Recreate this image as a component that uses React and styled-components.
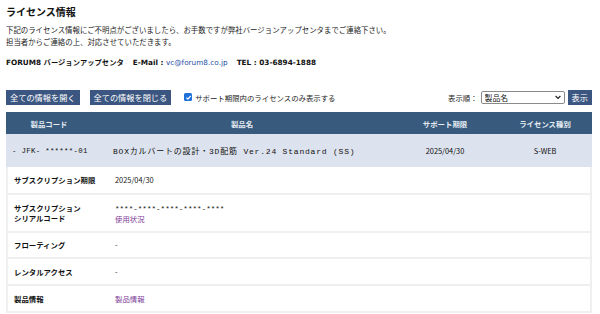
import React from 'react'
import styled, { createGlobalStyle } from 'styled-components'

const GlobalStyle = createGlobalStyle`
  html, body { margin: 0; padding: 0; background: #fff; }
  body {
    font-family: "Noto Sans CJK JP", "Noto Sans", sans-serif;
    color: #222;
  }
`;

const Page = styled.div`
  width: 600px;
  padding: 4px 8px 0 6px;
  box-sizing: border-box;
`;

const Title = styled.h1`
  margin: 0;
  font-size: 10px;
  line-height: 16px;
  font-weight: 700;
  color: #111;
`;

const Lead = styled.p`
  margin: 4px 0 0;
  font-size: 7.42px;
  line-height: 12px;
`;

const Contact = styled.p`
  margin: 9px 0 0;
  font-family: "DejaVu Sans", "Noto Sans CJK JP", sans-serif;
  font-size: 7.3px;
  line-height: 12px;
  font-weight: 700;
  color: #111;

  a { color: #1f4fa8; font-weight: 400; text-decoration: none; }
  span { margin-left: 9px; }
`;

const Toolbar = styled.div`
  margin-top: 20px;
  height: 16px;
  display: flex;
  align-items: center;
  gap: 10px;
`;

const Button = styled.button`
  height: 15px;
  padding: 0 4px;
  border: none;
  background: #3b5680;
  color: #fff;
  font-family: inherit;
  font-size: 8.2px;
  line-height: 15px;
  cursor: pointer;
`;

const CheckLabel = styled.label`
  display: flex;
  align-items: center;
  gap: 3px;
  font-size: 7.4px;
  margin-left: 3px;
`;

const Box = styled.span`
  width: 8px;
  height: 8px;
  border-radius: 1.5px;
  background: #1e6fd9;
  display: flex;
  align-items: center;
  justify-content: center;
`;

const SortArea = styled.div`
  margin-left: auto;
  display: flex;
  align-items: center;
  gap: 3px;
  font-size: 7.4px;
`;

const SelectWrap = styled.div`
  position: relative;
  width: 84px;
  height: 13px;
`;

const Select = styled.select`
  appearance: none;
  width: 100%;
  height: 100%;
  box-sizing: border-box;
  border: 1px solid #8a8a8a;
  border-radius: 2px;
  background: #fff;
  padding: 0 0 0 3px;
  font-family: inherit;
  font-size: 7.8px;
  color: #111;
`;

const Chevron = styled.svg`
  position: absolute;
  right: 4px;
  top: 4px;
  pointer-events: none;
`;

const Grid = styled.div`
  display: grid;
  grid-template-columns: 86px 300px 106px 1fr;
  align-items: center;
  width: 586px;
`;

const HeadRow = styled(Grid)`
  margin-top: 7px;
  height: 22px;
  background: #375a7d;
  color: #e6ecf3;
  font-size: 7.4px;
  font-weight: 700;
  text-align: center;
`;

const SummaryRow = styled(Grid)`
  height: 33px;
  background: #dde3ee;
  font-size: 7.4px;
  color: #111;
`;

const Mono = styled.div`
  font-family: "Liberation Mono", "Noto Sans CJK JP", monospace;
  font-size: ${p => p.$size || 8}px;
  letter-spacing: ${p => p.$ls || 0}px;
  padding-left: ${p => p.$pad || 0}px;
  white-space: nowrap;
`;

const Cell = styled.div`
  text-align: center;
`;

const Detail = styled.div`
  width: 586px;
  box-sizing: border-box;
  border: 2px solid #efefef;
  border-top: none;
`;

const DetailRow = styled.div`
  display: grid;
  grid-template-columns: 101px 1fr;
  align-items: center;
  height: ${p => p.$h}px;
  padding-left: 6px;
  font-size: 7.4px;
  line-height: 10px;
  border-top: ${p => (p.$first ? 'none' : '2px solid #efefef')};
  box-sizing: border-box;
`;

const Label = styled.div`
  font-weight: 700;
  color: #111;
`;

const Value = styled.div`
  color: #222;
`;

const Serial = styled.span`
  font-family: "Liberation Mono", monospace;
  font-size: 7.6px;
`;

const Link = styled.a`
  color: #7d3c98;
  text-decoration: none;
`;

const details = [
  { label: 'サブスクリプション期限', value: '2025/04/30', h: 26 },
  {
    label: <>サブスクリプション<br />シリアルコード</>,
    value: <><Serial>****-****-****-****-****</Serial><br /><Link href="#">使用状況</Link></>,
    h: 38,
  },
  { label: 'フローティング', value: '-', h: 26 },
  { label: 'レンタルアクセス', value: '-', h: 27 },
  { label: '製品情報', value: <Link href="#">製品情報</Link>, h: 27 },
];

export default function App() {
  return (
    <>
      <GlobalStyle />
      <Page>
        <Title>ライセンス情報</Title>
        <Lead>
          下記のライセンス情報にご不明点がございましたら、お手数ですが弊社バージョンアップセンタまでご連絡下さい。<br />
          担当者からご連絡の上、対応させていただきます。
        </Lead>
        <Contact>
          FORUM8 バージョンアップセンタ
          <span>E-Mail : <a href="#">vc@forum8.co.jp</a></span>
          <span>TEL : 03-6894-1888</span>
        </Contact>

        <Toolbar>
          <Button>全ての情報を開く</Button>
          <Button>全ての情報を閉じる</Button>
          <CheckLabel>
            <Box>
              <svg width="7" height="7" viewBox="0 0 10 10">
                <path d="M2 5.2 L4.2 7.4 L8.2 2.6" fill="none" stroke="#fff" strokeWidth="1.8" />
              </svg>
            </Box>
            サポート期限内のライセンスのみ表示する
          </CheckLabel>
          <SortArea>
            表示順：
            <SelectWrap>
              <Select defaultValue="name">
                <option value="name">製品名</option>
              </Select>
              <Chevron width="6" height="5" viewBox="0 0 10 7">
                <path d="M1 1 L5 5 L9 1" fill="none" stroke="#222" strokeWidth="2" />
              </Chevron>
            </SelectWrap>
            <Button>表示</Button>
          </SortArea>
        </Toolbar>

        <HeadRow>
          <Cell>製品コード</Cell>
          <Cell>製品名</Cell>
          <Cell>サポート期限</Cell>
          <Cell>ライセンス種別</Cell>
        </HeadRow>
        <SummaryRow>
          <Mono $size={7.4} $ls={0.3} $pad={6}>-  JFK- ******-01</Mono>
          <Mono $size={8} $ls={0.8} $pad={21}>BOXカルバートの設計・3D配筋 Ver.24 Standard (SS)</Mono>
          <Cell>2025/04/30</Cell>
          <Cell>S-WEB</Cell>
        </SummaryRow>

        <Detail>
          {details.map((d, i) => (
            <DetailRow key={i} $h={d.h} $first={i === 0}>
              <Label>{d.label}</Label>
              <Value>{d.value}</Value>
            </DetailRow>
          ))}
        </Detail>
      </Page>
    </>
  )
}
